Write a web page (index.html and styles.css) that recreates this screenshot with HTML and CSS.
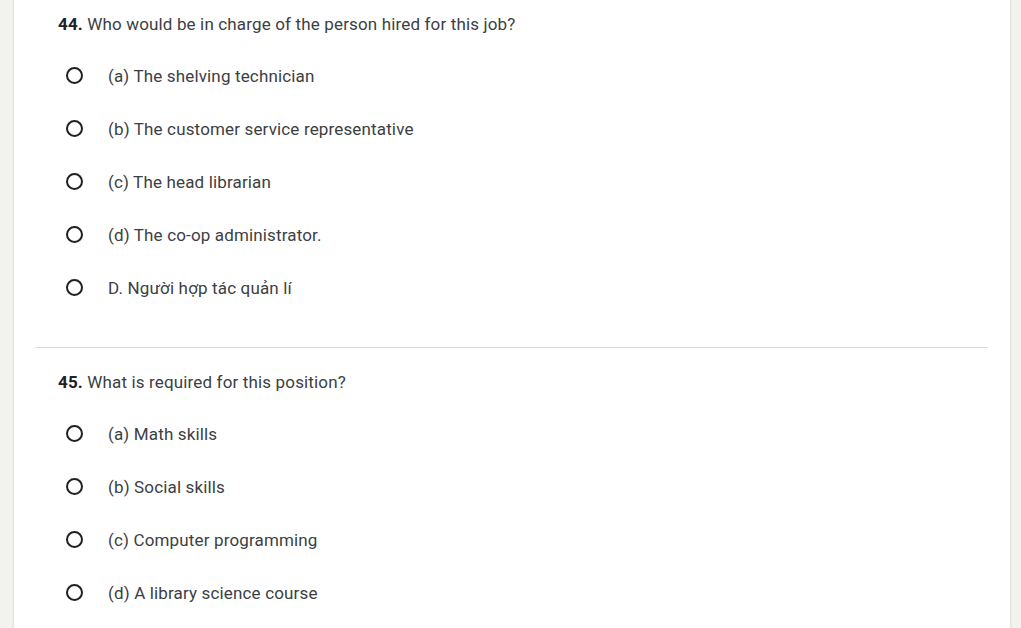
FILE: index.html
```html
<!DOCTYPE html>
<html>
<head>
<meta charset="utf-8">
<link rel="stylesheet" href="styles.css">
</head>
<body>
<div class="card">
  <section class="q">
    <div class="q-title"><b>44.</b> Who would be in charge of the person hired for this job?</div>
    <div class="opt"><span class="radio"></span><span class="label">(a) The shelving technician</span></div>
    <div class="opt"><span class="radio"></span><span class="label">(b) The customer service representative</span></div>
    <div class="opt"><span class="radio"></span><span class="label">(c) The head librarian</span></div>
    <div class="opt"><span class="radio"></span><span class="label">(d) The co-op administrator.</span></div>
    <div class="opt"><span class="radio"></span><span class="label">D. Người hợp tác quản lí</span></div>
  </section>
  <div class="divider"></div>
  <section class="q q2">
    <div class="q-title"><b>45.</b> What is required for this position?</div>
    <div class="opt"><span class="radio"></span><span class="label">(a) Math skills</span></div>
    <div class="opt"><span class="radio"></span><span class="label">(b) Social skills</span></div>
    <div class="opt"><span class="radio"></span><span class="label">(c) Computer programming</span></div>
    <div class="opt"><span class="radio"></span><span class="label">(d) A library science course</span></div>
  </section>
</div>
</body>
</html>
```
FILE: styles.css
```css
html, body {
  margin: 0;
  padding: 0;
  height: 100%;
  overflow: hidden;
}
body {
  background: #f2f2ef;
  font-family: Roboto, "Liberation Sans", sans-serif;
  color: #202124;
}
.card {
  margin-left: 14px;
  width: 996px;
  min-height: 100%;
  background: #fff;
  box-shadow: -1px 0 2px rgba(0,0,0,0.08), 1px 0 2px rgba(0,0,0,0.08);
}
.q {
  padding: 12px 0 33px 44px;
}
.q2 {
  padding-top: 22px;
}
.q-title {
  font-size: 17px;
  letter-spacing: 0.15px;
  line-height: 24px;
  margin-bottom: 13px;
  color: #3c4043;
}
.q-title b {
  font-weight: 700;
  color: #202124;
}
.opt {
  height: 53px;
  display: flex;
  align-items: center;
}
.radio {
  box-sizing: border-box;
  width: 17px;
  height: 17px;
  border: 2px solid #202124;
  border-radius: 50%;
  margin-left: 8px;
  margin-right: 25px;
  flex: none;
}
.label {
  font-size: 17px;
  letter-spacing: 0.15px;
  color: #3c4043;
  line-height: 24px;
}
.divider {
  height: 1px;
  background: #dadce0;
  margin: 0 22px 0 21px;
}
```
